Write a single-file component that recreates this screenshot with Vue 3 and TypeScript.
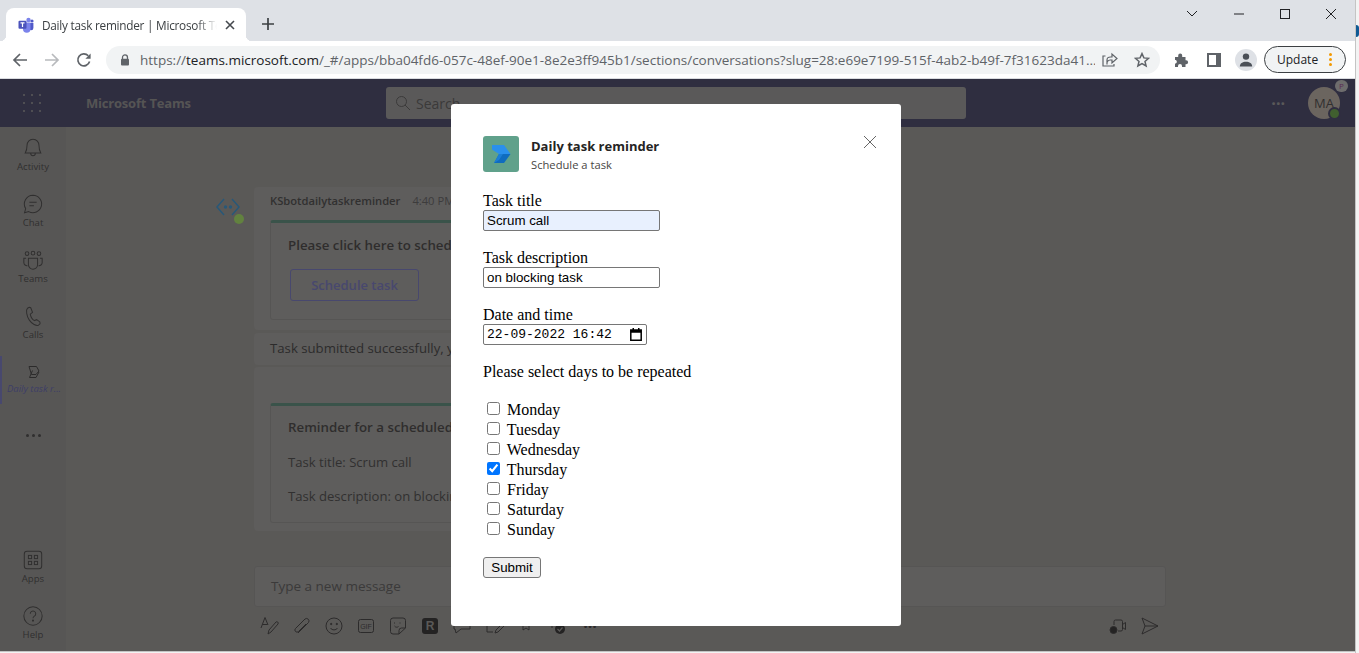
<script setup lang="ts">
import { ref } from "vue";

const navTop = [
	{ id: "activity", label: "Activity" },
	{ id: "chat", label: "Chat" },
	{ id: "teams", label: "Teams" },
	{ id: "calls", label: "Calls" }
];

const days = ref([
	{ name: "Monday", checked: false },
	{ name: "Tuesday", checked: false },
	{ name: "Wednesday", checked: false },
	{ name: "Thursday", checked: true },
	{ name: "Friday", checked: false },
	{ name: "Saturday", checked: false },
	{ name: "Sunday", checked: false }
]);

const taskTitle = ref("Scrum call");
const taskDescription = ref("on blocking task");
</script>

<template>
	<div class="desktop">
		<div class="window">
			<div class="tabstrip">
				<div class="tab">
					<svg class="favicon" width="16" height="16" viewBox="0 0 16 16">
						<circle cx="10.500" cy="3" r="2.200" fill="#7b83eb" />
						<circle cx="14" cy="4" r="1.600" fill="#5059c9" />
						<path d="M11 6h4.400v5a2.200 2.200 0 0 1-4.400 0z" fill="#5059c9" />
						<path d="M5 5.500h7.500V12a3.700 3.700 0 0 1-7.500 0z" fill="#7b83eb" />
						<rect x="0.500" y="3.800" width="8" height="8" rx="1" fill="#4b53bc" />
						<path d="M2.500 5.900h4M4.500 5.900v4" stroke="#fff" stroke-width="1.200" fill="none" />
					</svg>
					<span class="tab-title">Daily task reminder | Microsoft Teams</span>
					<svg class="tab-close" width="10" height="10" viewBox="0 0 10 10">
						<path d="M1 1l8 8M9 1l-8 8" stroke="#45494e" stroke-width="1.600" />
					</svg>
				</div>
				<svg class="newtab" width="14" height="14" viewBox="0 0 14 14">
					<path d="M7 1v12M1 7h12" stroke="#3c4043" stroke-width="1.700" />
				</svg>
				<div class="winctl">
					<svg width="12" height="8" viewBox="0 0 12 8"><path d="M1 1l5 5 5-5" stroke="#202124" fill="none" /></svg>
					<svg width="10" height="2" viewBox="0 0 10 2"><path d="M0 1h10" stroke="#202124" /></svg>
					<svg width="10" height="10" viewBox="0 0 10 10"><rect x=".5" y=".5" width="9" height="9" stroke="#202124" fill="none" /></svg>
					<svg width="10" height="10" viewBox="0 0 10 10"><path d="M0 0l10 10M10 0L0 10" stroke="#202124" /></svg>
				</div>
			</div>

			<div class="toolbar">
				<svg class="nav-ic" width="16" height="16" viewBox="0 0 16 16">
					<path d="M15 8H2M8 2L2 8l6 6" stroke="#5f6368" stroke-width="1.700" fill="none" />
				</svg>
				<svg class="nav-ic" width="16" height="16" viewBox="0 0 16 16">
					<path d="M1 8h13M8 2l6 6-6 6" stroke="#b8babd" stroke-width="1.700" fill="none" />
				</svg>
				<svg class="nav-ic" width="16" height="16" viewBox="0 0 16 16">
					<path d="M13.600 9.600A6 6 0 1 1 12.300 3.800" stroke="#5f6368" stroke-width="1.700" fill="none" />
					<path d="M14.600 1.600v5.200H9.400z" fill="#5f6368" />
				</svg>
				<div class="omnibox">
					<svg width="10" height="12" viewBox="0 0 10 12">
						<path d="M2.500 5V3.400a2.500 2.500 0 0 1 5 0V5" stroke="#5f6368" stroke-width="1.300" fill="none" />
						<rect x="1" y="4.800" width="8" height="6.600" rx="1" fill="#5f6368" />
					</svg>
					<span class="url"><span class="url-dim">https://</span>teams.microsoft.com<span class="url-dim">/_#/apps/bba04fd6-057c-48ef-90e1-8e2e3ff945b1/sections/conversations?slug=28:e69e7199-515f-4ab2-b49f-7f31623da41...</span></span>
					<svg class="share" width="16" height="15" viewBox="0 0 16 15">
						<path d="M5 12.500V8c0-2 1.400-3 3.500-3H10V2l5 4.500L10 11V8H8C6.500 8 5.600 9 5 10.500M3.500 4H1v10h11v-2" stroke="#5f6368" stroke-width="1.200" fill="none" />
					</svg>
					<svg width="16" height="16" viewBox="0 0 16 16">
						<path d="M8 1.600l1.900 4.300 4.700.4-3.600 3.100 1.100 4.600L8 11.600l-4.100 2.400L5 9.400 1.400 6.300l4.700-.4z" stroke="#5f6368" stroke-width="1.500" fill="none" />
					</svg>
				</div>
				<svg class="ext" width="16" height="16" viewBox="0 0 16 16">
					<path d="M1 5h3.200V3.500a2 2 0 0 1 4 0V5h3.300v3.200h.6a2 2 0 0 1 0 4h-.6V15H8v-1a2 2 0 0 0-4 0v1H1v-3.500h.8a2 2 0 0 0 0-3.500H1z" fill="#5f6368" />
				</svg>
				<svg class="side" width="14" height="14" viewBox="0 0 14 14">
					<path d="M0 0h14v14H0z M2 2v10h7V2z" fill="#5f6368" fill-rule="evenodd" />
				</svg>
				<div class="profile">
					<svg width="14" height="14" viewBox="0 0 14 14">
						<circle cx="7" cy="3.600" r="3.200" fill="#4a4f57" />
						<path d="M0.800 13.500c0-3.200 2.800-4.800 6.200-4.800s6.200 1.600 6.200 4.800z" fill="#4a4f57" />
					</svg>
				</div>
				<div class="update">
					<span>Update</span>
					<span class="update-dots"><i></i><i></i><i></i></span>
				</div>
			</div>

			<div class="teams">
				<header class="t-head">
					<div class="waffle"><i v-for="n in 9" :key="n"></i></div>
					<div class="t-brand">Microsoft Teams</div>
					<div class="t-search">
						<svg width="16" height="16" viewBox="0 0 16 16">
							<circle cx="6.500" cy="6.500" r="5" stroke="#505050" fill="none" />
							<path d="M10 10l5 5" stroke="#505050" />
						</svg>
						<span>Search</span>
					</div>
					<div class="t-more">···</div>
					<div class="t-avatar">
						MA
						<span class="t-badge-p">P</span>
						<span class="t-badge-ok"></span>
					</div>
				</header>

				<div class="t-body">
					<nav class="rail">
						<div v-for="item in navTop" :key="item.id" class="rail-item">
							<svg width="22" height="22" viewBox="0 0 24 24" fill="none" stroke="#3a3a3a" stroke-width="1.100">
								<path v-if="item.id === 'activity'" d="M12 2.500c-4 0-6.500 3-6.500 6.500 0 4-.5 6-2 8.500h17c-1.500-2.500-2-4.500-2-8.500 0-3.500-2.500-6.500-6.500-6.500zM9.500 18a2.500 2.500 0 0 0 5 0" />
								<g v-else-if="item.id === 'chat'">
									<path d="M12 2.500a9.500 9.500 0 1 1-4.700 17.800L2.800 21.500l1.200-4.500A9.500 9.500 0 0 1 12 2.500z" />
									<path d="M8 10h8M8 14h5" />
								</g>
								<g v-else-if="item.id === 'teams'">
									<circle cx="12" cy="4.500" r="2" /><circle cx="5.500" cy="5" r="2" /><circle cx="18.500" cy="5" r="2" />
									<path d="M7 10h10v7a5 5 0 0 1-10 0zM4.500 10H2v5a3.500 3.500 0 0 0 4 3.200M19.500 10H22v5a3.500 3.500 0 0 1-4 3.200" />
								</g>
								<path v-else d="M8 2.500L6 3.500C4 5.500 5 12 8 16.500s7.500 6.500 10 5.500l1.700-1.500-.2-2-3.500-2.500-2.500 1c-2-1-4-4.500-4.500-7L11.500 8 9.500 3z" />
							</svg>
							<span>{{ item.label }}</span>
						</div>
						<div class="rail-item rail-active">
							<svg width="14" height="14" viewBox="0 0 14 14" fill="none" stroke="#333">
								<path d="M2 1.500h7.500L12 6l-3 3.500H4.500zM5.500 5.500L2.500 12.500H9L12 7" />
							</svg>
							<span>Daily task r...</span>
						</div>
						<div class="rail-dots"><i></i><i></i><i></i></div>
						<div class="rail-spacer"></div>
						<div class="rail-item">
							<svg width="22" height="22" viewBox="0 0 24 24" fill="none" stroke="#3a3a3a" stroke-width="1.100">
								<rect x="2.500" y="2.500" width="19" height="19" rx="3" />
								<rect x="7" y="7" width="3.500" height="3.500" /><rect x="13.500" y="7" width="3.500" height="3.500" />
								<rect x="7" y="13.500" width="3.500" height="3.500" /><rect x="13.500" y="13.500" width="3.500" height="3.500" />
							</svg>
							<span>Apps</span>
						</div>
						<div class="rail-item">
							<svg width="22" height="22" viewBox="0 0 24 24" fill="none" stroke="#3a3a3a" stroke-width="1.100">
								<circle cx="12" cy="12" r="10" />
								<path d="M9 9.500a3 3 0 1 1 4.500 2.600c-1 .6-1.500 1.200-1.500 2.400" />
								<circle cx="12" cy="17" r=".6" fill="#3a3a3a" />
							</svg>
							<span>Help</span>
						</div>
					</nav>

					<main class="chat">
						<div class="thread">
							<div class="bot-col">
								<svg width="26" height="26" viewBox="0 0 26 26">
									<path d="M8 4L1 12l7 8M16 4l7 8-7 8" stroke="#2a8ccc" stroke-width="1.500" fill="none" />
									<circle cx="9.500" cy="12" r="1.700" fill="#2a8ccc" /><circle cx="14.500" cy="12" r="1.700" fill="#2a8ccc" />
								</svg>
								<span class="bot-ok"></span>
							</div>
							<div class="messages">
								<section class="msg msg-first">
									<div class="msg-meta"><b>KSbotdailytaskreminder</b><span>4:40 PM</span></div>
									<div class="card">
										<p class="card-title">Please click here to schedule a task</p>
										<div class="card-btn">Schedule task</div>
									</div>
								</section>
								<section class="msg msg-plain">Task submitted successfully, you</section>
								<section class="msg msg-last">
									<div class="card">
										<p class="card-title">Reminder for a scheduled task!</p>
										<p class="card-line">Task title: Scrum call</p>
										<p class="card-line">Task description: on blocking task</p>
									</div>
								</section>
							</div>
						</div>

						<div class="composer">
							<div class="composer-box">Type a new message</div>
							<div class="composer-tools">
								<svg width="20" height="20" viewBox="0 0 20 20" fill="none" stroke="#333">
									<path d="M1 12L5 1.500 8 9M2.500 8.500h5M8 18l1-4 7-8c1-1 3 .5 2 2l-7 8z" />
								</svg>
								<svg width="20" height="20" viewBox="0 0 20 20" fill="none" stroke="#333">
									<path d="M6 17L16.500 6.500a2.500 2.500 0 0 0-3.500-3.500L3.500 12.500a2 2 0 0 0 3 3L14 8" />
								</svg>
								<svg width="20" height="20" viewBox="0 0 20 20" fill="none" stroke="#333">
									<circle cx="10" cy="10" r="8" /><circle cx="7.200" cy="8" r=".7" fill="#333" /><circle cx="12.800" cy="8" r=".7" fill="#333" />
									<path d="M6.500 12c1.500 2.500 5.500 2.500 7 0" />
								</svg>
								<svg width="20" height="20" viewBox="0 0 20 20" fill="none" stroke="#333">
									<rect x="2.500" y="3.500" width="15" height="13" rx="2" />
									<text x="10" y="12.500" text-anchor="middle" class="gif-label">GIF</text>
								</svg>
								<svg width="20" height="20" viewBox="0 0 20 20" fill="none" stroke="#333">
									<path d="M11 18H5a2.500 2.500 0 0 1-2.500-2.500V4.500A2.500 2.500 0 0 1 5 2h10a2.500 2.500 0 0 1 2.500 2.500V12zM11 18v-3.500a2.500 2.500 0 0 1 2.500-2.500h4" />
									<path d="M6.500 10c1 1.500 3 1.500 4 .5M6.500 6.500v1M12 6.500v1" />
								</svg>
								<span class="r-app">R</span>
								<svg width="20" height="20" viewBox="0 0 20 20" fill="none" stroke="#333">
									<path d="M2 3h16v10H9l-5 4-1-4H2z" />
								</svg>
								<svg width="20" height="20" viewBox="0 0 20 20" fill="none" stroke="#333">
									<path d="M3 3h12v6M3 3v13h6M11 17l1-3 6-6 2 2-6 6z" />
								</svg>
								<svg width="20" height="20" viewBox="0 0 20 20" fill="none" stroke="#333">
									<path d="M5 3h10v4l-2 2v5l-3-2-3 2V9L5 7z" />
								</svg>
								<svg width="20" height="20" viewBox="0 0 20 20">
									<path d="M4 3h9v6M4 3v9" fill="none" stroke="#333" />
									<circle cx="12" cy="13" r="5" fill="#222" />
									<path d="M9.500 13l2 2 3-3.500" fill="none" stroke="#8f8e8b" stroke-width="1.200" />
								</svg>
								<span class="more-tools">···</span>
								<span class="tools-spacer"></span>
								<svg width="20" height="20" viewBox="0 0 20 20" fill="none" stroke="#333">
									<path d="M6 9V5.500A1.500 1.500 0 0 1 7.500 4H13a1.500 1.500 0 0 1 1.500 1.500v8A1.500 1.500 0 0 1 13 15h-3M14.500 8.500l3-2v7l-3-2" />
									<circle cx="5.500" cy="14" r="3.500" fill="#222" />
								</svg>
								<svg width="20" height="20" viewBox="0 0 20 20" fill="none" stroke="#333">
									<path d="M2 2l16 8-16 8 3-8zM5 10h13" />
								</svg>
							</div>
						</div>
					</main>
				</div>

				<div class="overlay">
					<div class="dialog">
						<div class="dlg-head">
							<div class="dlg-logo">
								<svg width="20" height="20" viewBox="0 0 20 20">
									<path d="M1 1h12l6.500 9H8L1 5.500z" fill="#2a90ec" />
									<path d="M8 10h11.500L13 19H3z" fill="#0f6cbf" />
									<path d="M8 10L3 19l5-3 4-6z" fill="#1a7ed6" />
								</svg>
							</div>
							<div class="dlg-titles">
								<div class="dlg-title">Daily task reminder</div>
								<div class="dlg-sub">Schedule a task</div>
							</div>
							<svg class="dlg-close" width="14" height="14" viewBox="0 0 14 14">
								<path d="M1 1l12 12M13 1L1 13" stroke="#666" stroke-width="1" />
							</svg>
						</div>
						<form class="task-form" @submit.prevent>
							<label class="f-label" for="task-title">Task title</label>
							<input id="task-title" v-model="taskTitle" class="f-input f-filled" type="text" />
							<label class="f-label" for="task-desc">Task description</label>
							<input id="task-desc" v-model="taskDescription" class="f-input" type="text" />
							<label class="f-label">Date and time</label>
							<div class="f-date">
								<span>22-09-2022 16:42</span>
								<svg width="12" height="13" viewBox="0 0 12 13">
									<path d="M.8 2h10.400v10.200H.8z" fill="none" stroke="#000" stroke-width="1.500" />
									<path d="M.8 2h10.400v2.800H.8zM2.500 0h1.500v2H2.500zM8 0h1.500v2H8z" fill="#000" />
								</svg>
							</div>
							<div class="f-repeat">Please select days to be repeated</div>
							<div v-for="day in days" :key="day.name" class="f-day">
								<input v-model="day.checked" type="checkbox" /> {{ day.name }}
							</div>
							<button class="f-submit" type="submit">Submit</button>
						</form>
					</div>
				</div>
			</div>
		</div>
		<div class="edge"><span class="edge-blob"></span></div>
	</div>
</template>

<style>
html, body {
	margin: 0;
	height: 100%;
	overflow: hidden;
}
</style>

<style scoped>
.desktop {
	width: 1359px;
	height: 653px;
	display: flex;
	overflow: hidden;
	background: #f3f3f3;
}

.window {
	width: 1355px;
	height: 651px;
	flex: none;
	display: flex;
	flex-direction: column;
	background: #fff;
	overflow: hidden;
	font-family: "Open Sans", "Noto Sans", sans-serif;
	border-bottom: 1px solid #c4c4c4;
}

.edge {
	flex: 1;
	position: relative;
	border-left: 1px solid #c4c4c4;
}

.edge-blob {
	position: absolute;
	left: 0;
	top: 25px;
	width: 3px;
	height: 12px;
	border-radius: 0 6px 6px 0;
	background: #0f5a94;
}

.tabstrip {
	height: 41px;
	flex: none;
	display: flex;
	align-items: flex-end;
	background: #dee1e6;
	padding-left: 6px;
}

.tab {
	position: relative;
	width: 240px;
	height: 33px;
	box-sizing: border-box;
	background: #fff;
	border-radius: 8px 8px 0 0;
	display: flex;
	align-items: center;
	padding: 0 11px 0 12px;
}

.tab::before,
.tab::after {
	content: "";
	position: absolute;
	bottom: 0;
	width: 6px;
	height: 6px;
}

.tab::before {
	left: -6px;
	background: radial-gradient(circle at 0 0, transparent 6px, #fff 6.500px);
}

.tab::after {
	right: -6px;
	background: radial-gradient(circle at 100% 0, transparent 6px, #fff 6.500px);
}

.favicon {
	flex: none;
	margin-right: 8px;
}

.tab-title {
	flex: 1;
	overflow: hidden;
	white-space: nowrap;
	font-size: 11.800px;
	letter-spacing: -0.25px;
	color: #3c4043;
	-webkit-mask-image: linear-gradient(to right, #000 88%, transparent);
	mask-image: linear-gradient(to right, #000 88%, transparent);
}

.tab-close {
	flex: none;
	margin-left: 8px;
}

.newtab {
	margin: 0 0 10px 15px;
}

.winctl {
	margin-left: auto;
	align-self: flex-start;
	display: flex;
	align-items: center;
	height: 28px;
	gap: 36px;
	padding-right: 19px;
}

.toolbar {
	height: 37px;
	flex: none;
	display: flex;
	align-items: center;
	background: #fff;
	border-bottom: 1px solid #dadce0;
}

.nav-ic {
	flex: none;
	margin-left: 12px;
}

.nav-ic:nth-child(2),
.nav-ic:nth-child(3) {
	margin-left: 16px;
}

.omnibox {
	flex: none;
	width: 1054px;
	height: 28px;
	margin-left: 14px;
	padding: 0 10px 0 14px;
	box-sizing: border-box;
	display: flex;
	align-items: center;
	background: #f1f3f4;
	border-radius: 14px;
}

.url {
	width: 956px;
	margin-left: 10px;
	white-space: nowrap;
	overflow: hidden;
	font-size: 13.500px;
	color: #202124;
}

.url-dim {
	color: #5f6368;
}

.share {
	margin-left: 7px;
	margin-right: 16px;
}

.ext {
	flex: none;
	margin-left: 14px;
}

.side {
	flex: none;
	margin-left: 17px;
}

.profile {
	flex: none;
	width: 22px;
	height: 22px;
	margin-left: 14px;
	border-radius: 50%;
	background: #dee1e6;
	display: flex;
	align-items: center;
	justify-content: center;
}

.update {
	flex: none;
	width: 82px;
	height: 27px;
	box-sizing: border-box;
	margin-left: 7px;
	border: 1px solid #3c4043;
	border-radius: 14px;
	background: #f1f3f4;
	display: flex;
	align-items: center;
	padding-left: 12px;
	font-size: 12px;
	color: #202124;
}

.update-dots {
	margin-left: 11px;
	display: flex;
	flex-direction: column;
	gap: 2px;
}

.update-dots i {
	width: 3px;
	height: 3px;
	border-radius: 50%;
	background: #f29900;
}

.teams {
	position: relative;
	flex: 1;
	min-height: 0;
	display: flex;
	flex-direction: column;
	background: #8f8e8b;
}

.t-head {
	height: 48px;
	flex: none;
	display: flex;
	align-items: center;
	background: #39385d;
}

.waffle {
	margin-left: 23px;
	width: 18px;
	display: grid;
	grid-template-columns: repeat(3, 2px);
	gap: 6px;
}

.waffle i {
	width: 2px;
	height: 2px;
	background: #8f8f8f;
	border-radius: 50%;
}

.t-brand {
	margin-left: 45px;
	width: 300px;
	font-size: 13px;
	font-weight: 700;
	letter-spacing: -0.2px;
	color: #858585;
}

.t-search {
	width: 580px;
	height: 32px;
	box-sizing: border-box;
	padding-left: 9px;
	background: #8f8f8f;
	border-radius: 3px;
	display: flex;
	align-items: center;
	gap: 5px;
	font-size: 14px;
	color: #505050;
}

.t-more {
	margin-left: auto;
	font-size: 16px;
	font-weight: 700;
	color: #8f8f8f;
}

.t-avatar {
	position: relative;
	width: 32px;
	height: 32px;
	margin: 0 15px 0 23px;
	border-radius: 50%;
	background: #b1a69b;
	color: #3a3a3a;
	display: flex;
	align-items: center;
	justify-content: center;
	font-size: 13px;
}

.t-badge-p {
	position: absolute;
	top: -7px;
	right: -8px;
	width: 13px;
	height: 12px;
	border-radius: 6px;
	background: #b7b7b7;
	color: #8f3087;
	font-size: 8px;
	line-height: 12px;
	text-align: center;
}

.t-badge-ok {
	position: absolute;
	right: -1px;
	bottom: -1px;
	width: 9px;
	height: 9px;
	border-radius: 50%;
	background: #5a9a3a;
	border: 2px solid #39385d;
}

.t-body {
	flex: 1;
	min-height: 0;
	display: flex;
}

.rail {
	width: 66px;
	flex: none;
	display: flex;
	flex-direction: column;
	background: #898987;
}

.rail-item {
	height: 56px;
	flex: none;
	display: flex;
	flex-direction: column;
	align-items: center;
	justify-content: center;
	gap: 1px;
	color: #3a3a3a;
	font-size: 9.600px;
	line-height: 13px;
}

.rail-active {
	height: 48px;
	margin-top: 5px;
	border-left: 2px solid #6a6cb8;
	box-sizing: border-box;
	color: #5558a8;
	font-style: italic;
	white-space: nowrap;
	font-size: 9.500px;
	gap: 3px;
}

.rail-dots {
	display: flex;
	justify-content: center;
	gap: 3px;
	margin-top: 30px;
}

.rail-dots i {
	width: 3px;
	height: 3px;
	border-radius: 50%;
	background: #3a3a3a;
}

.rail-spacer {
	flex: 1;
}

.chat {
	flex: 1;
	min-width: 0;
	display: flex;
	flex-direction: column;
	background: #8f8e8b;
}

.thread {
	flex: 1;
	min-height: 0;
	display: flex;
	padding-top: 60px;
}

.bot-col {
	position: relative;
	width: 188px;
	flex: none;
	padding-left: 150px;
	box-sizing: border-box;
	padding-top: 8px;
}

.bot-ok {
	position: absolute;
	left: 168px;
	top: 27px;
	width: 10px;
	height: 10px;
	border-radius: 50%;
	background: #9ee05a;
}

.messages {
	width: 620px;
	font-size: 13.200px;
	color: #333;
}

.msg {
	background: #969694;
	padding: 0 16px;
	border-radius: 4px;
}

.msg-first {
	height: 143px;
	padding-top: 4px;
	box-sizing: border-box;
}

.msg-plain {
	height: 32px;
	margin-top: 3px;
	line-height: 30px;
}

.msg-last {
	height: 164px;
	margin-top: 2px;
	padding-top: 36px;
	box-sizing: border-box;
}

.msg-meta {
	font-size: 11.200px;
	height: 29px;
	line-height: 20px;
	display: flex;
	gap: 12px;
	color: #555;
}

.msg-meta b {
	font-weight: 600;
	color: #3c3c3c;
}

.card {
	border: 1px solid #878785;
	border-top: 3px solid #4f8370;
	border-radius: 3px;
	padding: 13px 17px;
	height: 100px;
	box-sizing: border-box;
}

.msg-last .card {
	height: 120px;
	padding-top: 12px;
}

.card p {
	margin: 0;
}

.card-title {
	font-size: 13.300px;
	font-weight: 600;
	line-height: 18px;
	color: #383736;
}

.card .card-line {
	font-size: 13.100px;
	line-height: 18px;
	margin-top: 16.500px;
	color: #3c3c3c;
}

.card-btn {
	margin-top: 15px;
	margin-left: 2px;
	width: 129px;
	height: 32px;
	box-sizing: border-box;
	border: 1px solid #6a6cb8;
	border-radius: 3px;
	color: #6a6cb8;
	font-size: 13px;
	font-weight: 600;
	display: flex;
	align-items: center;
	justify-content: center;
}

.composer {
	flex: none;
	margin-left: 188px;
	width: 912px;
	height: 85px;
}

.composer-box {
	height: 41px;
	box-sizing: border-box;
	border: 1px solid #878785;
	border-radius: 3px;
	background: #969694;
	padding-left: 16px;
	font-size: 13.500px;
	line-height: 39px;
	color: #505050;
}

.composer-tools {
	margin-top: 9px;
	height: 20px;
	display: flex;
	align-items: center;
	gap: 12px;
	padding-left: 6px;
	padding-right: 6px;
}

.gif-label {
	font-size: 7px;
	font-family: "Liberation Sans", sans-serif;
	fill: #333;
	stroke: none;
}

.r-app {
	width: 16px;
	height: 16px;
	margin: 0 2px;
	border-radius: 3px;
	background: #222;
	color: #8f8e8b;
	font: 700 12px/16px "Liberation Sans", sans-serif;
	text-align: center;
}

.more-tools {
	width: 20px;
	text-align: center;
	font-weight: 700;
	color: #333;
}

.tools-spacer {
	flex: 1;
}

.overlay {
	position: absolute;
	inset: 0;
	padding-right: 3px;
	display: flex;
	align-items: center;
	justify-content: center;
	background: rgba(37, 36, 35, 0.5);
}

.dialog {
	position: relative;
	width: 450px;
	height: 522px;
	box-sizing: border-box;
	padding: 32px;
	background: #fff;
	border-radius: 3px;
	color: #000;
}

.dlg-head {
	display: flex;
	align-items: center;
	height: 36px;
}

.dlg-logo {
	width: 36px;
	height: 36px;
	flex: none;
	border-radius: 3px;
	background: #60a18b;
	display: flex;
	align-items: center;
	justify-content: center;
}

.dlg-titles {
	margin-left: 12px;
	padding-top: 2px;
}

.dlg-title {
	font-size: 13px;
	line-height: 18px;
	font-weight: 700;
	color: #252423;
}

.dlg-sub {
	margin-top: 2px;
	font-size: 11.200px;
	line-height: 16px;
	color: #484644;
}

.dlg-close {
	position: absolute;
	top: 31px;
	right: 24px;
}

.task-form {
	margin-top: 20px;
	display: flex;
	flex-direction: column;
	align-items: flex-start;
	font: 16px/18px "Liberation Serif", "Times New Roman", serif;
}

.f-label {
	display: block;
	height: 18px;
}

.f-input {
	width: 177px;
	height: 21px;
	box-sizing: border-box;
	padding: 1px 3px;
	margin: 0 0 18px;
	border: 1px solid #767676;
	border-radius: 2px;
	background: #fff;
	outline: none;
	color: #000;
	font: 13.333px "Liberation Sans", Arial, sans-serif;
}

.f-filled {
	background: #e8f0fe;
}

.f-date {
	width: 164px;
	height: 21px;
	box-sizing: border-box;
	margin-bottom: 18px;
	padding: 0 4px 0 3px;
	border: 1px solid #767676;
	border-radius: 2px;
	display: flex;
	align-items: center;
	justify-content: space-between;
	font: 13px "Liberation Mono", monospace;
}

.f-repeat {
	height: 18px;
	margin-bottom: 18px;
}

.f-day {
	height: 20px;
	line-height: 20px;
}

.f-day input {
	margin: 3px 3px 3px 4px;
	vertical-align: 0;
}

.f-submit {
	margin-top: 18px;
	width: 58px;
	height: 21px;
	box-sizing: border-box;
	padding: 1px 6px;
	border: 1px solid #767676;
	border-radius: 3px;
	background: #efefef;
	color: #000;
	font: 13.333px "Liberation Sans", Arial, sans-serif;
}
</style>
